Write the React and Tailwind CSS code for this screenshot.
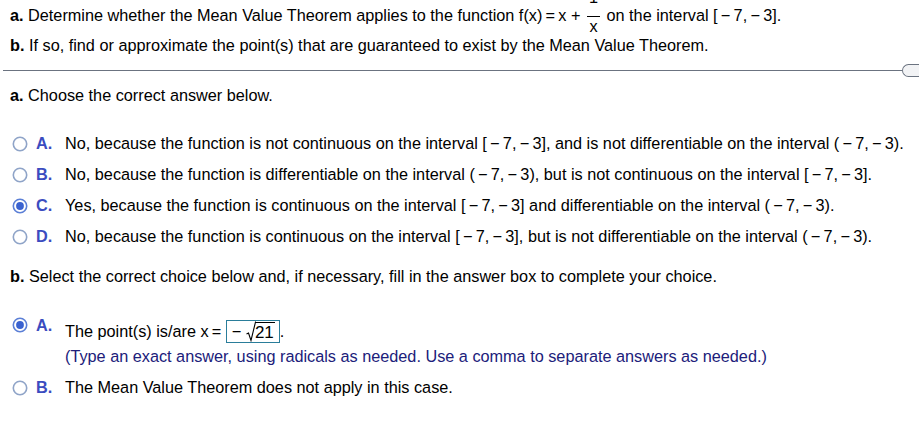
const F = { fontFamily: '"Liberation Sans", Arial, sans-serif' };

function Radio({ checked }) {
  return (
    <svg width="16" height="16" viewBox="0 0 16 16" className="shrink-0">
      <circle cx="8" cy="8" r="6.7" fill="white" stroke={checked ? "#5b7fd6" : "#8fa4c8"} strokeWidth="1.6" />
      {checked && <circle cx="8" cy="8" r="3.9" fill="#3a62d0" />}
    </svg>
  );
}

function Option({ letter, checked, children, className = "" }) {
  return (
    <div className={"flex items-center h-[31px] whitespace-nowrap " + className}>
      <div className="w-[12px]" />
      <Radio checked={checked} />
      <span className="ml-[8px] w-[29px] font-bold text-[#3b4cc0]">{letter}.</span>
      <span>{children}</span>
    </div>
  );
}

export default function App() {
  return (
    <div style={F} className="w-[919px] h-[434px] bg-white text-[16.25px] text-black overflow-hidden relative">
      <div className="pl-[10px] pt-[5px]">
        <div className="h-[21px] flex items-center whitespace-nowrap">
          <b>a.</b>&nbsp;Determine whether the Mean Value Theorem applies to the function f(x)&thinsp;=&thinsp;x +&nbsp;
          <span className="inline-flex flex-col items-center leading-none mx-[2px] translate-y-[1px]">
            <span className="h-[13px] flex items-end pb-[1px] -translate-y-[10px]">1</span>
            <span className="w-[13px] border-t border-black" />
            <span className="h-[13px] flex items-start pt-[1px]">x</span>
          </span>
          &nbsp;on the interval [&thinsp;−&thinsp;7,&thinsp;−&thinsp;3].
        </div>
        <div className="h-[21px] mt-[9px] flex items-center whitespace-nowrap">
          <b>b.</b>&nbsp;If so, find or approximate the point(s) that are guaranteed to exist by the Mean Value Theorem.
        </div>
      </div>

      <div className="flex items-center mt-[8px] pl-[3px]">
        <div className="flex-1 border-t border-[#6b7380]" />
        <div className="w-[17px] h-[13px] border border-[#6b7380] border-r-0 rounded-l-[7px] bg-[#f2f3f5]" />
      </div>

      <div className="pl-[10px] mt-[8px] h-[21px] flex items-center">
        <b>a.</b>&nbsp;Choose the correct answer below.
      </div>

      <div className="mt-[22px] flex flex-col">
        <Option letter="A">No, because the function is not continuous on the interval [&thinsp;−&thinsp;7,&thinsp;−&thinsp;3], and is not differentiable on the interval (&thinsp;−&thinsp;7,&thinsp;−&thinsp;3).</Option>
        <Option letter="B">No, because the function is differentiable on the interval (&thinsp;−&thinsp;7,&thinsp;−&thinsp;3), but is not continuous on the interval [&thinsp;−&thinsp;7,&thinsp;−&thinsp;3].</Option>
        <Option letter="C" checked>Yes, because the function is continuous on the interval [&thinsp;−&thinsp;7,&thinsp;−&thinsp;3] and differentiable on the interval (&thinsp;−&thinsp;7,&thinsp;−&thinsp;3).</Option>
        <Option letter="D">No, because the function is continuous on the interval [&thinsp;−&thinsp;7,&thinsp;−&thinsp;3], but is not differentiable on the interval (&thinsp;−&thinsp;7,&thinsp;−&thinsp;3).</Option>
      </div>

      <div className="pl-[10px] mt-[14px] h-[21px] flex items-center whitespace-nowrap">
        <b>b.</b>&nbsp;Select the correct choice below and, if necessary, fill in the answer box to complete your choice.
      </div>

      <div className="mt-[28px] flex whitespace-nowrap">
        <div className="w-[12px]" />
        <div className="pt-[2px]"><Radio checked /></div>
        <span className="ml-[8px] w-[29px] font-bold text-[#3b4cc0] leading-[20px]">A.</span>
        <div className="flex flex-col">
          <div className="flex items-center mt-[3px] h-[26px]">
            The point(s) is/are x&thinsp;=&nbsp;
            <span className="inline-flex items-center h-[23px] pl-[5px] pr-[4px] border border-[#2a7d9a]">
              −&nbsp;
              <span className="inline-flex items-end">
                <svg width="10" height="21" viewBox="0 0 10 21" className="-mr-[1px]">
                  <path d="M0.5 13 L2.5 12 L5 19.5 L9.5 1 L10 1" fill="none" stroke="black" strokeWidth="1.1" />
                </svg>
                <span className="border-t border-black leading-[19px] text-[17px] pr-[1px]">21</span>
              </span>
            </span>
            <span>.</span>
          </div>
          <div className="text-[#20207a] mt-[2px] h-[21px] flex items-center">
            (Type an exact answer, using radicals as needed. Use a comma to separate answers as needed.)
          </div>
        </div>
      </div>

      <Option letter="B" className="mt-[5px]">The Mean Value Theorem does not apply in this case.</Option>
    </div>
  );
}
